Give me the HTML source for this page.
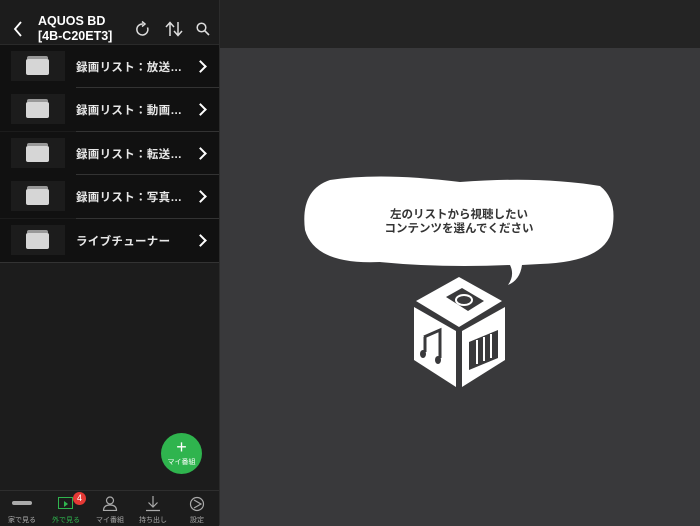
<!DOCTYPE html><html><head><meta charset="utf-8"><style>
body{margin:0;width:700px;height:525px;overflow:hidden;background:#39393b;font-family:"Liberation Sans","Noto Sans CJK JP",sans-serif;position:relative}
#left{position:absolute;left:0;top:0;width:219px;height:525px;background:#1c1c1c;border-right:1px solid #2c2c2c}
#top{position:absolute;left:220px;top:0;width:480px;height:48px;background:#242424}
.hdr{position:absolute;left:0;top:0;width:219px;height:44px;background:#1c1c1c;border-bottom:1px solid #2a2a2a}
.title{position:absolute;left:38px;top:14px;color:#fff;font-weight:bold;font-size:12.5px;line-height:15px}
.row{position:absolute;left:0;width:219px;height:43px;background:#111}
.row .th{position:absolute;left:11px;top:6px;width:54px;height:30px;background:#1c1c1c}
.row .th:before{content:"";position:absolute;left:16px;top:5px;width:21px;height:3px;background:#999;border-radius:2px 2px 0 0}
.row .th:after{content:"";position:absolute;left:15px;top:8px;width:23px;height:16px;background:#d6d6d6;border-radius:2px}
.row .t{position:absolute;left:76px;top:14px;color:#e8e8e8;font-size:11.5px;font-weight:bold;letter-spacing:.3px}
.row .ar{position:absolute;left:196px;top:17px;width:7px;height:7px;border-right:2px solid #fff;border-top:2px solid #fff;transform:rotate(45deg)}
.sep{position:absolute;left:76px;width:143px;height:1px;background:#333}
.tab{position:absolute;top:490px;left:0;width:219px;height:35px;background:#1c1c1c;border-top:1px solid #2e2e2e}
.tl{position:absolute;top:515px;font-size:7px;color:#aaa;width:44px;text-align:center}
</style></head><body>
<div id="top"></div>
<div id="left">
<div class="hdr">
<svg style="position:absolute;left:13px;top:21px" width="10" height="16"><path d="M8 1L2 8L8 15" stroke="#fff" stroke-width="1.8" fill="none"/></svg>
<div class="title">AQUOS BD<br>[4B-C20ET3]</div>
<svg style="position:absolute;left:135px;top:20px" width="16" height="18" viewBox="0 0 16 18"><path d="M12.5 7.5A5.5 5.5 0 1 1 8 4" stroke="#ddd" stroke-width="1.5" fill="none"/><path d="M7 1.5L10 4L7 6.5" stroke="#ddd" stroke-width="1.5" fill="none"/></svg>
<svg style="position:absolute;left:165px;top:21px" width="18" height="16"><path d="M5 15V2M1 6L5 1.5L9 6M13 1V14M9 10L13 14.5L17 10" stroke="#ddd" stroke-width="1.5" fill="none"/></svg>
<svg style="position:absolute;left:196px;top:22px" width="14" height="14"><circle cx="5.5" cy="5.5" r="4.3" stroke="#ddd" stroke-width="1.5" fill="none"/><path d="M8.7 8.7L13 13" stroke="#ddd" stroke-width="1.6"/></svg>
</div>
<div class="row" style="top:45px"><div class="th"></div><div class="t">録画リスト：放送…</div><div class="ar"></div></div>
<div class="sep" style="top:87px"></div>
<div class="row" style="top:88px"><div class="th"></div><div class="t">録画リスト：動画…</div><div class="ar"></div></div>
<div class="sep" style="top:131px"></div>
<div class="row" style="top:132px"><div class="th"></div><div class="t">録画リスト：転送…</div><div class="ar"></div></div>
<div class="sep" style="top:174px"></div>
<div class="row" style="top:175px"><div class="th"></div><div class="t">録画リスト：写真…</div><div class="ar"></div></div>
<div class="sep" style="top:218px"></div>
<div class="row" style="top:219px"><div class="th"></div><div class="t">ライブチューナー</div><div class="ar"></div></div>
<div class="sep" style="top:262px;left:0;width:219px"></div>
<div style="position:absolute;left:161px;top:433px;width:41px;height:41px;border-radius:50%;background:#2fb44e;color:#fff;text-align:center">
<div style="font-size:18px;line-height:18px;margin-top:5px">+</div><div style="font-size:7px;margin-top:1px">マイ番組</div></div>
<div class="tab">
<div style="position:absolute;left:12px;top:10px;width:20px;height:4px;background:#aaa;border-radius:2px"></div>
<div style="position:absolute;left:58px;top:6px;width:13px;height:10px;border:1.5px solid #2fb44e"></div>
<div style="position:absolute;left:64px;top:10px;width:0;height:0;border-left:4px solid #2fb44e;border-top:3px solid transparent;border-bottom:3px solid transparent"></div>
<div style="position:absolute;left:73px;top:1px;width:13px;height:13px;border-radius:50%;background:#e53935;color:#fff;font-size:9px;text-align:center;line-height:13px">4</div>
<svg style="position:absolute;left:102px;top:5px" width="16" height="15"><circle cx="8" cy="4.5" r="3.5" stroke="#aaa" stroke-width="1.2" fill="none"/><path d="M1.5 14.5Q1.5 9 8 9Q14.5 9 14.5 14.5Z" stroke="#aaa" stroke-width="1.2" fill="none"/></svg>
<svg style="position:absolute;left:145px;top:5px" width="16" height="16"><path d="M8 0V11M3.5 6.5L8 11L12.5 6.5M1 14.5H15" stroke="#aaa" stroke-width="1.2" fill="none"/></svg>
<svg style="position:absolute;left:189px;top:5px" width="16" height="16"><circle cx="8" cy="8" r="6.5" stroke="#aaa" stroke-width="1.2" fill="none"/><path d="M5 4L12 8L5 12" stroke="#aaa" stroke-width="1.2" fill="none"/></svg>
</div>
<div class="tl" style="left:0">家で見る</div>
<div class="tl" style="left:44px;color:#2fb44e">外で見る</div>
<div class="tl" style="left:88px">マイ番組</div>
<div class="tl" style="left:131px">持ち出し</div>
<div class="tl" style="left:175px">設定</div>
</div>
<svg style="position:absolute;left:300px;top:170px" width="320" height="220" viewBox="300 170 320 220">
<path d="M330 180Q380 172 460 182Q540 176 600 186Q618 200 612 230Q605 262 540 264L522 265Q520 280 508 285Q515 275 510 265Q440 268 380 262Q315 265 305 230Q300 190 330 180Z" fill="#fff"/>
<text x="459" y="218" text-anchor="middle" font-size="11.5" font-weight="bold" fill="#333" font-family="Liberation Sans,Noto Sans CJK JP,sans-serif">左のリストから視聴したい</text>
<text x="459" y="232" text-anchor="middle" font-size="11.5" font-weight="bold" fill="#333" font-family="Liberation Sans,Noto Sans CJK JP,sans-serif">コンテンツを選んでください</text>
<polygon points="459,277 502,301 459,327 416,301" fill="#fff"/>
<polygon points="414,307 456,331 456,387 414,360" fill="#fff"/>
<polygon points="462,331 505,307 505,360 462,387" fill="#fff"/>
<polygon points="446,297 462,288 484,301 468,311" fill="#39393b"/>
<ellipse cx="464" cy="300" rx="8" ry="5" fill="none" stroke="#fff" stroke-width="2"/>
<path d="M424 337L440 330V358" stroke="#39393b" stroke-width="3" fill="none"/><path d="M425 337V352" stroke="#39393b" stroke-width="3"/>
<ellipse cx="423" cy="354" rx="3" ry="4" fill="#39393b"/><ellipse cx="438" cy="360" rx="3" ry="4" fill="#39393b"/>
<polygon points="469,342 498,330 498,358 469,370" fill="#39393b"/>
<path d="M477 340V364M484 337V361M491 334V358" stroke="#fff" stroke-width="2"/>
</svg>
</body></html>
